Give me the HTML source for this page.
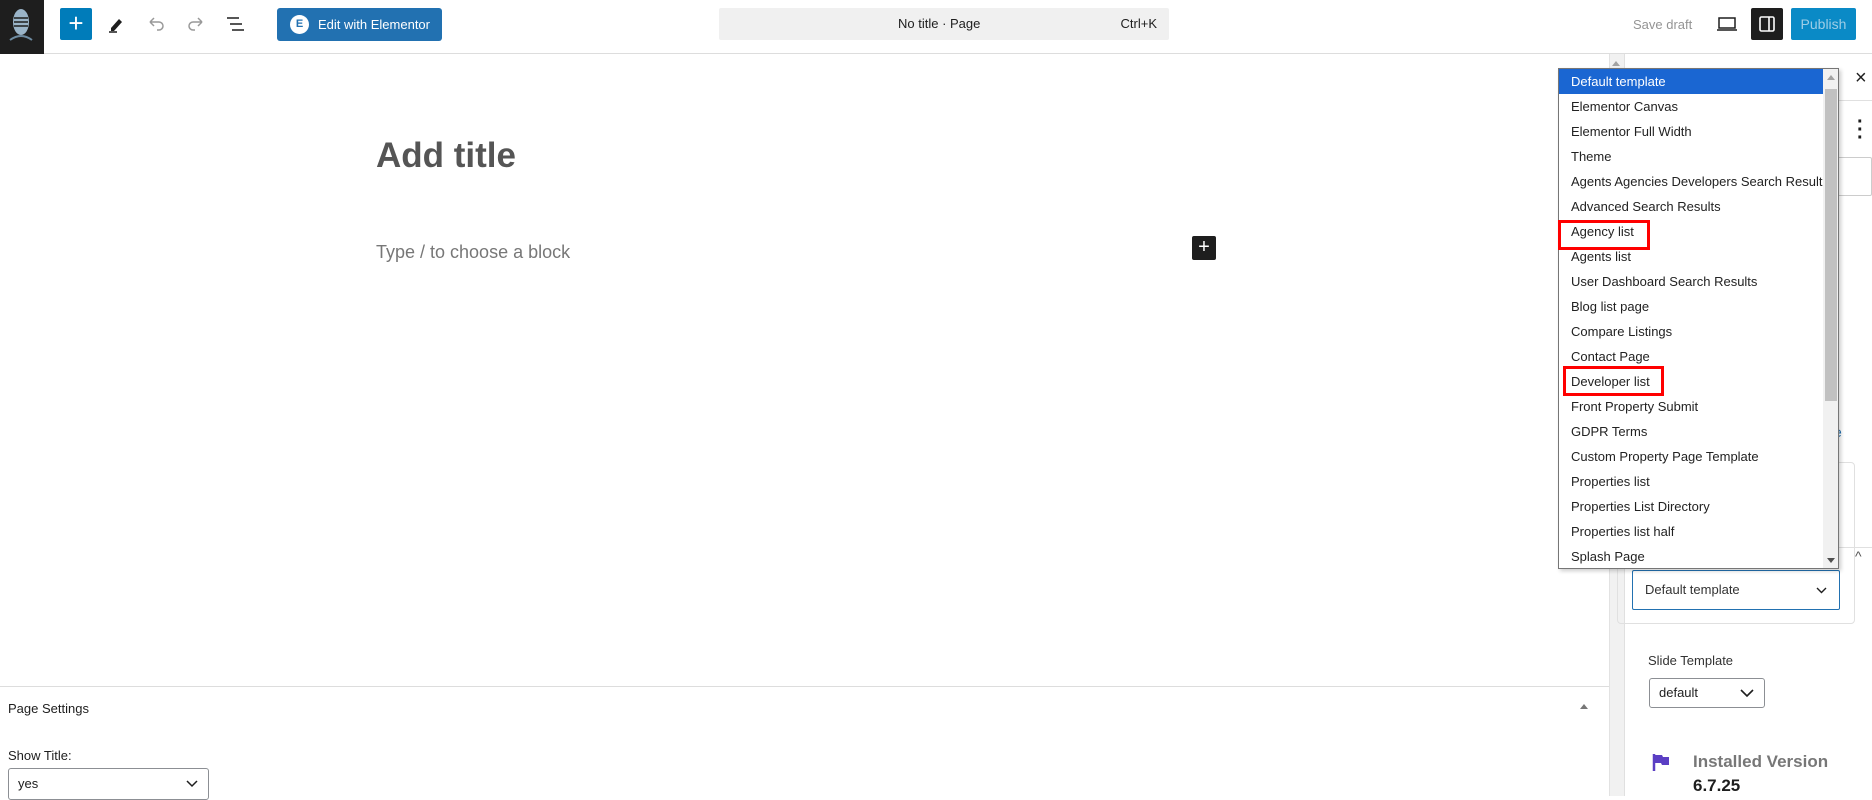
<!DOCTYPE html>
<html><head><meta charset="utf-8">
<style>
*{box-sizing:border-box;margin:0;padding:0}
body{width:1872px;height:796px;overflow:hidden;background:#fff;font-family:"Liberation Sans",sans-serif;color:#1e1e1e;position:relative}
.abs{position:absolute}
.top{left:0;top:0;width:1872px;height:54px;border-bottom:1px solid #ddd;background:#fff}
.dd div{height:25px;line-height:25px;padding-left:12px;font-size:13px;color:#222;white-space:nowrap}
.chev{position:absolute}
</style></head><body>
<div class="abs top"></div>
<div class="abs" style="left:0;top:0;width:44px;height:54px;background:#1e1e1e">
<svg width="44" height="54"><ellipse cx="21" cy="22" rx="8" ry="13" fill="#9ab4c8"/><path d="M14 18h14M14 22h14M14 26h14" stroke="#1e1e1e" stroke-width="1.5"/><path d="M10 40q11-8 22 0" stroke="#6d8aa0" fill="none" stroke-width="2"/></svg></div>
<div class="abs" style="left:60px;top:8px;width:32px;height:32px;background:#007cba;border-radius:2px;color:#fff;font-size:26px;line-height:30px;text-align:center">+</div>
<svg class="abs" style="left:106px;top:14px" width="20" height="20"><path d="M5 14l8-9 3 3-8 9H5z" fill="#1e1e1e"/><path d="M3 18h8" stroke="#1e1e1e" stroke-width="1.5"/></svg>
<svg class="abs" style="left:146px;top:14px" width="20" height="20"><path d="M4 8h9a4 4 0 0 1 0 8h-2M4 8l4-4M4 8l4 4" stroke="#999" fill="none" stroke-width="1.5"/></svg>
<svg class="abs" style="left:186px;top:14px" width="20" height="20"><path d="M16 8H7a4 4 0 0 0 0 8h2M16 8l-4-4M16 8l-4 4" stroke="#999" fill="none" stroke-width="1.5"/></svg>
<svg class="abs" style="left:226px;top:14px" width="22" height="20"><path d="M1 4h12M4 10h12M6 16h12" stroke="#1e1e1e" stroke-width="1.6"/></svg>
<div class="abs" style="left:277px;top:8px;width:165px;height:33px;background:#2271b1;border-radius:3px;color:#fff;font-size:13px;line-height:33px;padding-left:41px">Edit with Elementor</div>
<div class="abs" style="left:290px;top:15px;width:19px;height:19px;border-radius:50%;background:#fff;color:#2271b1;font-size:11px;font-weight:bold;text-align:center;line-height:19px">E</div>
<div class="abs" style="left:719px;top:8px;width:450px;height:32px;background:#f0f0f0;border-radius:2px;font-size:13px;line-height:32px"><span class="abs" style="left:179px">No title · Page</span><span class="abs" style="right:12px">Ctrl+K</span></div>
<div class="abs" style="left:1633px;top:17px;font-size:13px;color:#949494">Save draft</div>
<svg class="abs" style="left:1716px;top:14px" width="22" height="20"><rect x="3" y="4" width="16" height="10" fill="none" stroke="#1e1e1e" stroke-width="1.5"/><path d="M1 16h20" stroke="#1e1e1e" stroke-width="1.5"/></svg>
<div class="abs" style="left:1751px;top:8px;width:32px;height:32px;background:#1e1e1e;border-radius:2px"><svg width="32" height="32"><rect x="9" y="9" width="14" height="14" rx="1.5" fill="none" stroke="#fff" stroke-width="1.6"/><path d="M18 9v14" stroke="#fff" stroke-width="1.6"/></svg></div>
<div class="abs" style="left:1791px;top:8px;width:65px;height:32px;background:#0a8ac6;border-radius:2px;color:#9dcde6;font-size:14px;line-height:32px;text-align:center">Publish</div>

<div class="abs" style="left:376px;top:136px;font-size:35px;font-weight:bold;color:#555">Add title</div>
<div class="abs" style="left:376px;top:242px;font-size:18px;color:#777">Type / to choose a block</div>
<div class="abs" style="left:1192px;top:236px;width:24px;height:24px;background:#1e1e1e;border-radius:2px;color:#fff;font-size:20px;line-height:23px;text-align:center">+</div>

<div class="abs" style="left:0;top:686px;width:1609px;height:1px;background:#ddd"></div>
<div class="abs" style="left:8px;top:701px;font-size:13px;color:#1e1e1e">Page Settings</div>
<div class="abs" style="left:1580px;top:704px;width:0;height:0;border-left:4px solid transparent;border-right:4px solid transparent;border-bottom:5px solid #777"></div>
<div class="abs" style="left:8px;top:748px;font-size:13px">Show Title:</div>
<div class="abs" style="left:8px;top:768px;width:201px;height:32px;border:1px solid #8c8f94;border-radius:3px;font-size:13px;line-height:30px;padding-left:9px">yes<svg class="chev" style="right:10px;top:11px" width="12" height="8"><path d="M1 1l5 5 5-5" stroke="#1e1e1e" fill="none" stroke-width="1.5"/></svg></div>

<div class="abs" style="left:1609px;top:54px;width:15px;height:742px;background:#f1f1f1;border-left:1px solid #e2e2e2"></div>
<div class="abs" style="left:1612px;top:61px;border-left:4px solid transparent;border-right:4px solid transparent;border-bottom:5px solid #a3a3a3"></div>
<div class="abs" style="left:1624px;top:54px;width:1px;height:742px;background:#e0e0e0"></div>
<div class="abs" style="left:1624px;top:100px;width:248px;height:1px;background:#e0e0e0"></div>
<div class="abs" style="left:1855px;top:67px;font-size:20px">×</div>
<div class="abs" style="left:1857px;top:118px;font-size:20px;font-weight:bold;line-height:8px">·<br>·<br>·</div>
<div class="abs" style="left:1780px;top:157px;width:92px;height:39px;border:1px solid #ccc;border-radius:2px"></div>
<div class="abs" style="left:1834px;top:424px;font-size:14px;color:#2271b1">e</div>
<div class="abs" style="left:1617px;top:462px;width:238px;height:162px;border:1px solid #e0e0e0;border-radius:4px"></div>
<div class="abs" style="left:1617px;top:547px;width:255px;height:1px;background:#e0e0e0"></div>
<div class="abs" style="left:1855px;top:548px;font-size:14px;color:#555">^</div>
<div class="abs" style="left:1632px;top:570px;width:208px;height:40px;border:1px solid #2271b1;border-radius:2px;font-size:13px;line-height:38px;padding-left:12px;color:#333">Default template<svg class="chev" style="right:12px;top:16px" width="11" height="7"><path d="M1 1l4.5 4.5L10 1" stroke="#1e1e1e" fill="none" stroke-width="1.4"/></svg></div>
<div class="abs" style="left:1648px;top:653px;font-size:13px;color:#333">Slide Template</div>
<div class="abs" style="left:1649px;top:678px;width:116px;height:30px;border:1px solid #8c8f94;border-radius:3px;font-size:13px;line-height:28px;padding-left:9px">default<svg class="chev" style="right:10px;top:10px" width="14" height="9"><path d="M1 1l6 6 6-6" stroke="#1e1e1e" fill="none" stroke-width="1.6"/></svg></div>
<svg class="abs" style="left:1652px;top:752px" width="18" height="20"><path d="M2 2v17" stroke="#5b3fc4" stroke-width="2.5"/><path d="M3 3h7l1 2h6v8h-7l-1-2H3z" fill="#5b3fc4"/></svg>
<div class="abs" style="left:1693px;top:752px;font-size:17px;font-weight:bold;color:#777">Installed Version</div>
<div class="abs" style="left:1693px;top:776px;font-size:17px;font-weight:bold;color:#1e1e1e">6.7.25</div>

<div class="abs dd" style="left:1558px;top:68px;width:281px;height:501px;border:1px solid #767676;background:#fff;box-shadow:2px 2px 4px rgba(0,0,0,.2);overflow:hidden">
<div style="background:#1a66d2;color:#fff;width:264px">Default template</div>
<div>Elementor Canvas</div><div>Elementor Full Width</div><div>Theme</div>
<div>Agents Agencies Developers Search Results</div><div>Advanced Search Results</div>
<div>Agency list</div><div>Agents list</div><div>User Dashboard Search Results</div>
<div>Blog list page</div><div>Compare Listings</div><div>Contact Page</div>
<div>Developer list</div><div>Front Property Submit</div><div>GDPR Terms</div>
<div>Custom Property Page Template</div><div>Properties list</div><div>Properties List Directory</div>
<div>Properties list half</div><div>Splash Page</div>
<div class="abs" style="left:264px;top:0;width:16px;height:499px;background:#f1f1f1;padding:0"></div>
<div class="abs" style="left:266px;top:20px;width:12px;height:312px;background:#c1c1c1;padding:0"></div>
<div class="abs" style="left:268px;top:6px;height:0;padding:0;border-left:4px solid transparent;border-right:4px solid transparent;border-bottom:5px solid #a3a3a3"></div>
<div class="abs" style="left:268px;top:489px;height:0;padding:0;border-left:4px solid transparent;border-right:4px solid transparent;border-top:5px solid #505050"></div>
</div>
<div class="abs" style="left:1558px;top:220px;width:92px;height:30px;border:3px solid #f00"></div>
<div class="abs" style="left:1563px;top:366px;width:101px;height:30px;border:3px solid #f00"></div>
</body></html>
